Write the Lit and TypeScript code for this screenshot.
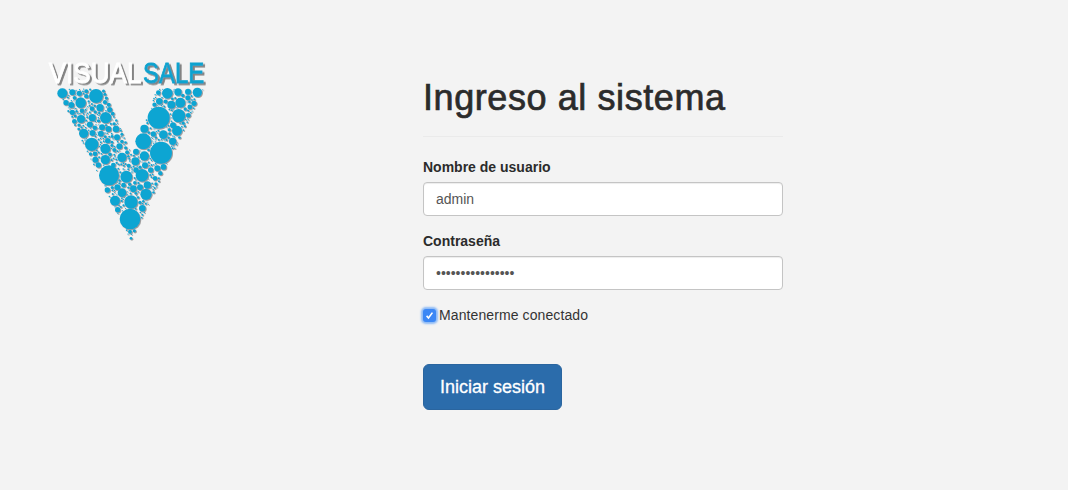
import { LitElement, html, css, svg } from "lit";
import { customElement } from "lit/decorators.js";

type Circle = [number, number, number];

const BIG: Circle[] = [
  [198,138,21],[152,158,16],[97,130,15],[127,127,9],[148,130,8],[169,124,6],[108,158,8],[124,165,9],[127,187,8],
  [153,207,12],[187,203,11],[227,203,17],[210,173,11],[186,176,7],[161,250,14],[133,214,7],[185,283,20],[233,272,8],
  [258,237,10],[261,262,9],[226,296,15],[226,329,14],[276,322,14],[196,329,9],[205,345,8],[253,300,6],[237,376,30],
  [289,380,18],[336,376,19],[255,452,15],[303,456,20],[348,433,17],[300,507,31],[263,479,8],[337,475,10],
  [276,428,13],[310,416,10],[352,405,11],[262,412,9],[232,420,8],[386,203,33],[446,197,20],[412,130,16],[451,158,15],
  [502,127,14],[474,125,9],[444,126,11],[388,154,10],[424,164,12],[385,128,7],[492,160,8],[429,226,9],[441,242,15],
  [400,254,13],[428,274,11],[340,274,24],[393,308,33],[343,318,14],[316,334,12],[343,236,12],[370,252,8],[318,305,9],
  [345,346,9],[318,360,8],[362,360,8],[382,355,9],[375,385,7],[250,345,7],[296,347,6],[300,545,6],[303,565,4],
];

function inV(x: number, y: number): boolean {
  const leftOuter = 78 + ((y - 115) * (303 - 78)) / (578 - 115);
  const rightOuter = 522 - ((y - 115) * (522 - 303)) / (578 - 115);
  if (y < 115 || y > 578 || x < leftOuter || x > rightOuter) return false;
  if (y < 318) {
    const leftInner = 222 + ((y - 115) * (308 - 222)) / (318 - 115);
    const rightInner = 380 - ((y - 115) * (380 - 308)) / (318 - 115);
    if (x > leftInner && x < rightInner) return false;
  }
  return true;
}

function fits(x: number, y: number, r: number): boolean {
  return inV(x, y) && inV(x - r, y) && inV(x + r, y) && inV(x, y - r) && inV(x, y + r);
}

/** Packs smaller bubbles into the V around the large ones, from a fixed seed. */
function packBubbles(): Circle[] {
  const all: Circle[] = [...BIG];
  let seed = 12345;
  const next = () => {
    seed = (seed * 16807) % 2147483647;
    return seed / 2147483647;
  };
  for (let i = 0; i < 9000; i++) {
    const x = 78 + next() * 444;
    const y = 115 + next() * 463;
    if (!inV(x, y)) continue;
    let r = i < 1500 ? 9 : i < 4000 ? 5 : 3;
    for (const [a, b, c] of all) {
      r = Math.min(r, Math.hypot(a - x, b - y) - c - 1.5);
      if (r < 1.5) break;
    }
    if (r < 1.5) continue;
    while (r >= 1.5 && !fits(x, y, r)) r -= 0.5;
    if (r >= 1.5) all.push([x, y, r]);
  }
  return all;
}

@customElement("app-root")
export class AppRoot extends LitElement {
  static styles = css`
    :host {
      display: block;
      min-height: 490px;
      background: #f3f3f3;
      font-family: "Liberation Sans", Arial, sans-serif;
      font-size: 14px;
      color: #333;
    }
    .page { display: flex; height: 490px; box-sizing: border-box; }
    .logo-col { width: 423px; flex: none; padding: 50px 0 0 30px; box-sizing: border-box; }
    .logo { display: block; width: 200px; height: 200px; }
    .logo-text { font-family: "Liberation Sans", Arial, sans-serif; font-size: 90px; font-weight: 400; stroke-width: 2.5px; }
    .form-col { width: 360px; flex: none; padding-top: 76px; }
    h1 {
      margin: 0;
      font-size: 36px;
      line-height: 44px;
      font-weight: 500;
      letter-spacing: 0.58px;
      -webkit-text-stroke: 0.7px #2b2b2b;
      color: #2b2b2b;
      padding-bottom: 16px;
      border-bottom: 1px solid #eaeaea;
    }
    .field { display: flex; flex-direction: column; }
    .first { margin-top: 20px; }
    .second { margin-top: 15px; }
    label.name { font-weight: 700; line-height: 20px; margin-bottom: 5px; color: #2b2b2b; }
    input.ctl {
      box-sizing: border-box;
      width: 360px;
      height: 34px;
      padding: 6px 12px;
      font: 14px "Liberation Sans", Arial, sans-serif;
      color: #555;
      background: #fff;
      border: 1px solid #c4c4c4;
      border-radius: 4px;
      box-shadow: inset 0 1px 1px rgba(0,0,0,.075);
      outline: none;
    }
    .remember {
      display: flex;
      align-items: center;
      gap: 3px;
      height: 20px;
      margin-top: 15px;
      color: #333;
      letter-spacing: 0.1px;
    }
    .box {
      width: 13px;
      height: 13px;
      flex: none;
      border-radius: 3px;
      background: #3b87f5;
      box-shadow: 0 0 2px 2px #8dbaf6;
      display: flex;
      align-items: center;
      justify-content: center;
      margin-top: 1px;
    }
    .box svg { display: block; }
    button {
      display: block;
      margin-top: 39px;
      width: 139px;
      height: 46px;
      padding: 0;
      background: #2b6cab;
      color: #fff;
      border: 1px solid #2a659f;
      border-radius: 6px;
      font: 18px "Liberation Sans", Arial, sans-serif;
      -webkit-text-stroke: 0.3px #fff;
    }
  `;

  render() {
    const bubbles = packBubbles();
    return html`
      <div class="page">
        <div class="logo-col">
          <svg class="logo" viewBox="0 0 600 600" role="img" aria-label="Visual Sale">
            <defs>
              <filter id="sh" x="-5%" y="-5%" width="112%" height="112%">
                <feDropShadow dx="2.5" dy="2.5" stdDeviation="1.5" flood-color="#555" flood-opacity=".65"></feDropShadow>
              </filter>
              <filter id="tsh" x="-5%" y="-10%" width="115%" height="130%">
                <feDropShadow dx="6" dy="5" stdDeviation="2" flood-color="#777" flood-opacity=".9"></feDropShadow>
              </filter>
            </defs>
            <g filter="url(#tsh)" class="logo-text">
              <text transform="translate(56 99) scale(.87 1)" fill="#fff" stroke="#fff">VISUAL</text>
              <text transform="translate(339 99) scale(.8 1)" fill="#0fa3cf" stroke="#0fa3cf">SALE</text>
            </g>
            <g filter="url(#sh)" fill="#0fa5d2">
              ${bubbles.map(([x, y, r]) => svg`<circle cx=${x.toFixed(1)} cy=${y.toFixed(1)} r=${r.toFixed(1)}></circle>`)}
            </g>
          </svg>
        </div>
        <div class="form-col">
          <h1>Ingreso al sistema</h1>
          <div class="field first">
            <label class="name" for="u">Nombre de usuario</label>
            <input class="ctl" id="u" type="text" value="admin" />
          </div>
          <div class="field second">
            <label class="name" for="p">Contraseña</label>
            <input class="ctl" id="p" type="password" value="0123456789abcdef" />
          </div>
          <div class="remember">
            <span class="box">
              <svg width="9" height="9" viewBox="0 0 9 9"><path d="M1.6 4.9 L3.5 7 L7.4 1.6" fill="none" stroke="#fff" stroke-width="1.6"></path></svg>
            </span>
            <span>Mantenerme conectado</span>
          </div>
          <button type="button">Iniciar sesión</button>
        </div>
      </div>
    `;
  }
}
